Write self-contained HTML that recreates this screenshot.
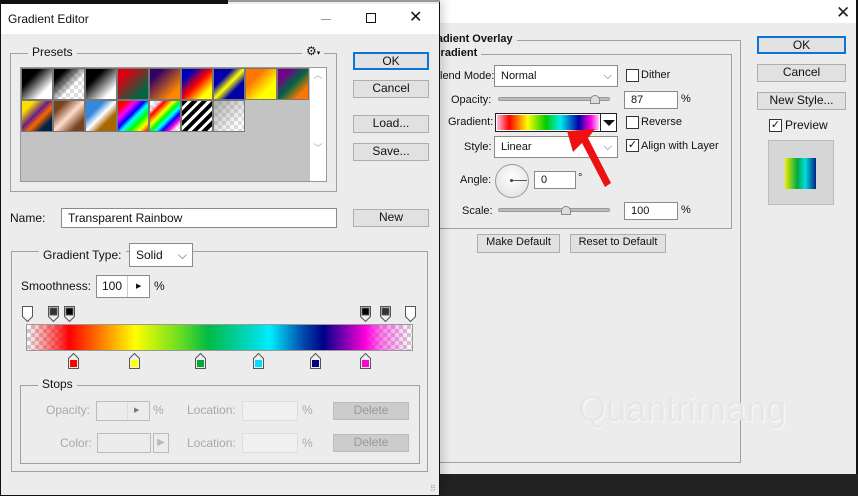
<!DOCTYPE html>
<html><head><meta charset="utf-8"><style>
*{box-sizing:border-box;margin:0;padding:0}
body{width:858px;height:496px;overflow:hidden;background:#ececec;position:relative;font-family:"Liberation Sans",sans-serif;font-size:11px;color:#111}
.a{position:absolute}
.btn{position:absolute;background:#e1e1e1;border:1px solid #adadad;text-align:center;font-size:12px;line-height:15px}
.inp{position:absolute;background:#fff;border:1px solid #8a8a8a;font-size:11px;padding-left:6px}
.box{position:absolute;border:1px solid #a0a0a0}
.lbl{position:absolute;background:#ececec;padding:0 4px;font-size:12px}
.cb{position:absolute;width:13px;height:13px;background:#fff;border:1px solid #333}
.dis{color:#a8a8a8}
.sw{position:absolute;width:32px;height:32px;border:1px solid #777}
.chk{background-color:#fff;background-image:linear-gradient(45deg,#ccc 25%,transparent 25%,transparent 75%,#ccc 75%),linear-gradient(45deg,#ccc 25%,transparent 25%,transparent 75%,#ccc 75%);background-size:8px 8px;background-position:0 0,4px 4px}
</style></head><body>
<!-- right dialog -->
<div class="a" style="left:0;top:0;width:858px;height:23px;background:#fff"></div>
<div class="a" style="left:856px;top:0;width:2px;height:496px;background:#111"></div>
<div class="a" style="left:836px;top:3px;font-size:17px;color:#222">✕</div>
<div class="a" style="left:440px;top:474px;width:418px;height:22px;background:#222"></div>
<div class="box" style="left:430px;top:40px;width:311px;height:423px"></div>
<div class="box" style="left:430px;top:54px;width:302px;height:175px"></div>
<div class="lbl" style="left:420px;top:33px;font-weight:bold;font-size:11px">Gradient Overlay</div>
<div class="lbl" style="left:428px;top:47px;font-weight:bold;font-size:11px">Gradient</div>
<div class="a" style="left:440px;top:70px">lend Mode:</div>
<div class="inp" style="left:494px;top:65px;width:124px;height:22px;line-height:20px">Normal<span style="position:absolute;right:5px;color:#555">⌵</span></div>
<div class="cb" style="left:626px;top:69px"></div><div class="a" style="left:641px;top:69px">Dither</div>
<div class="a" style="left:451px;top:94px">Opacity:</div>
<div class="a" style="left:498px;top:97px;width:112px;height:4px;background:#bbb;border-radius:2px;border:1px solid #999"></div>
<div class="a" style="left:590px;top:95px;width:10px;height:9px;background:#ddd;border:1px solid #888;border-radius:5px 5px 0 0"></div>
<div class="inp" style="left:624px;top:91px;width:54px;height:18px;line-height:16px">87</div><div class="a" style="left:681px;top:93px">%</div>
<div class="a" style="left:448px;top:116px">Gradient:</div>
<div class="a" style="left:495px;top:113px;width:122px;height:19px;border:1px solid #222;background:#fff"></div>
<div class="a" style="left:497px;top:115px;width:102px;height:15px;background:linear-gradient(90deg,#fbd 0%,#f00 12%,#ff0 30%,#0c0 48%,#0ee 62%,#00a 80%,#f0d 92%,#fcf 100%)"></div>
<div class="a" style="left:600px;top:114px;width:1px;height:17px;background:#222"></div>
<div class="a" style="left:603px;top:120px;width:0;height:0;border-left:6px solid transparent;border-right:6px solid transparent;border-top:6px solid #111"></div>
<div class="cb" style="left:626px;top:116px"></div><div class="a" style="left:641px;top:116px">Reverse</div>
<div class="a" style="left:464px;top:141px">Style:</div>
<div class="inp" style="left:494px;top:136px;width:124px;height:22px;line-height:20px">Linear<span style="position:absolute;right:5px;color:#555">⌵</span></div>
<div class="cb" style="left:626px;top:139px;font-size:11px;line-height:11px;text-align:center">✓</div><div class="a" style="left:641px;top:140px">Align with Layer</div>
<div class="a" style="left:460px;top:174px">Angle:</div>
<div class="a" style="left:495px;top:164px;width:34px;height:34px;border-radius:50%;border:1px solid #999;background:radial-gradient(circle at 50% 40%,#fff,#ddd)"></div>
<div class="a" style="left:511px;top:180px;width:16px;height:1px;background:#555"></div>
<div class="a" style="left:510px;top:179px;width:3px;height:3px;border-radius:50%;background:#444"></div>
<div class="inp" style="left:534px;top:171px;width:42px;height:18px;line-height:16px">0</div><div class="a" style="left:578px;top:172px">°</div>
<div class="a" style="left:462px;top:205px">Scale:</div>
<div class="a" style="left:498px;top:208px;width:112px;height:4px;background:#bbb;border-radius:2px;border:1px solid #999"></div>
<div class="a" style="left:561px;top:206px;width:10px;height:9px;background:#ddd;border:1px solid #888;border-radius:5px 5px 0 0"></div>
<div class="inp" style="left:624px;top:202px;width:54px;height:18px;line-height:16px">100</div><div class="a" style="left:681px;top:204px">%</div>
<div class="btn" style="left:477px;top:234px;width:83px;height:19px;font-size:11px">Make Default</div>
<div class="btn" style="left:570px;top:234px;width:96px;height:19px;font-size:11px">Reset to Default</div>
<div class="btn" style="left:757px;top:36px;width:89px;height:18px;border:2px solid #0a74d8">OK</div>
<div class="btn" style="left:757px;top:64px;width:89px;height:18px">Cancel</div>
<div class="btn" style="left:757px;top:92px;width:89px;height:18px">New Style...</div>
<div class="cb" style="left:769px;top:119px;font-size:11px;line-height:11px;text-align:center">✓</div><div class="a" style="left:785px;top:118px;font-size:12px">Preview</div>
<div class="a" style="left:768px;top:140px;width:66px;height:65px;background:#d6d6d6;border:1px solid #bbb"></div>
<div class="a" style="left:785px;top:158px;width:31px;height:31px;background:linear-gradient(90deg,#ee0,#0a4 40%,#0dd 65%,#028)"></div>
<div class="a" style="left:578px;top:388px;font-size:36px;color:#e6e6e6;text-shadow:1px 1px 1px #fafafa">Quantrimang</div>
<svg class="a" style="left:555px;top:125px" width="60" height="66"><polygon points="12,6 40,4 33,13 56,58 50,62 27,18 18,27" fill="#ee1111"/></svg>
<!-- left dialog -->
<div class="a" style="left:0;top:0;width:440px;height:496px;background:#ececec;border:1px solid #111;border-top:none;box-shadow:4px 0 8px rgba(0,0,0,.15)"></div>
<div class="a" style="left:0;top:0;width:228px;height:4px;background:#111"></div>
<div class="a" style="left:228px;top:0;width:212px;height:2px;background:#999"></div>
<div class="a" style="left:1px;top:4px;width:438px;height:30px;background:#fff"></div>
<div class="a" style="left:8px;top:12px;font-size:12px">Gradient Editor</div>
<div class="a" style="left:321px;top:19px;width:10px;height:1px;background:#999"></div>
<div class="a" style="left:366px;top:13px;width:10px;height:10px;border:1px solid #111"></div>
<div class="a" style="left:409px;top:7px;font-size:16px">✕</div>
<div class="box" style="left:10px;top:53px;width:327px;height:139px"></div>
<div class="lbl" style="left:28px;top:45px">Presets</div>
<div class="lbl" style="left:302px;top:44px;font-size:12px">⚙<span style="font-size:7px">▾</span></div>
<div class="a" style="left:20px;top:67px;width:307px;height:115px;background:#c3c3c3;border:1px solid #999"></div>
<div class="a" style="left:310px;top:68px;width:16px;height:113px;background:#fff;color:#aaa;font-size:9px;text-align:center">︿<br><br><br><br><br><br><br>﹀</div>
<div class="sw" style="left:21px;top:68px;background:linear-gradient(135deg,#000 30%,#fff 75%)"></div>
<div class="sw chk" style="left:53px;top:68px;background-image:linear-gradient(135deg,#000 20%,transparent 60%),linear-gradient(45deg,#ddd 25%,transparent 25%,transparent 75%,#ddd 75%),linear-gradient(45deg,#ddd 25%,transparent 25%,transparent 75%,#ddd 75%);background-size:auto,8px 8px,8px 8px;background-position:0 0,0 0,4px 4px"></div>
<div class="sw" style="left:85px;top:68px;background:linear-gradient(135deg,#000 30%,#fff 80%)"></div>
<div class="sw" style="left:117px;top:68px;background:linear-gradient(135deg,#d01 20%,#064 80%)"></div>
<div class="sw" style="left:149px;top:68px;background:linear-gradient(135deg,#306 20%,#f80 80%)"></div>
<div class="sw" style="left:181px;top:68px;background:linear-gradient(135deg,#00b 20%,#f00 50%,#ff0 80%)"></div>
<div class="sw" style="left:213px;top:68px;background:linear-gradient(135deg,#00a 30%,#ff0 50%,#00a 70%)"></div>
<div class="sw" style="left:245px;top:68px;background:linear-gradient(135deg,#f70 30%,#ff0 70%)"></div>
<div class="sw" style="left:277px;top:68px;background:linear-gradient(135deg,#708 20%,#064 50%,#f70 80%)"></div>
<div class="sw" style="left:21px;top:100px;background:linear-gradient(135deg,#fd0 20%,#628 45%,#f60 60%,#024 80%)"></div>
<div class="sw" style="left:53px;top:100px;background:linear-gradient(135deg,#742 20%,#fdc 50%,#742 80%)"></div>
<div class="sw" style="left:85px;top:100px;background:linear-gradient(135deg,#38d 30%,#fff 50%,#a60 70%)"></div>
<div class="sw" style="left:117px;top:100px;background:linear-gradient(135deg,#f00 15%,#f0f 30%,#00f 45%,#0ff 55%,#0f0 70%,#ff0 85%,#f00)"></div>
<div class="sw" style="left:149px;top:100px;background-color:#fff;background-image:linear-gradient(135deg,transparent 15%,#f00 25%,#ff0 40%,#0f0 50%,#0ff 60%,#00f 70%,#f0d 80%,transparent 90%),linear-gradient(45deg,#ddd 25%,transparent 25%,transparent 75%,#ddd 75%),linear-gradient(45deg,#ddd 25%,transparent 25%,transparent 75%,#ddd 75%);background-size:auto,8px 8px,8px 8px;background-position:0 0,0 0,4px 4px"></div>
<div class="sw" style="left:181px;top:100px;background:repeating-linear-gradient(135deg,#000 0 4px,#fff 4px 7px)"></div>
<div class="sw" style="left:213px;top:100px;background-color:#fff;background-image:linear-gradient(135deg,rgba(120,120,120,.6),transparent 80%),linear-gradient(45deg,#ddd 25%,transparent 25%,transparent 75%,#ddd 75%),linear-gradient(45deg,#ddd 25%,transparent 25%,transparent 75%,#ddd 75%);background-size:auto,8px 8px,8px 8px;background-position:0 0,0 0,4px 4px"></div>
<div class="btn" style="left:353px;top:52px;width:76px;height:18px;border:2px solid #0a74d8">OK</div>
<div class="btn" style="left:353px;top:80px;width:76px;height:18px">Cancel</div>
<div class="btn" style="left:353px;top:115px;width:76px;height:18px">Load...</div>
<div class="btn" style="left:353px;top:143px;width:76px;height:18px">Save...</div>
<div class="a" style="left:10px;top:211px;font-size:12px">Name:</div>
<div class="inp" style="left:61px;top:208px;width:276px;height:20px;line-height:18px;font-size:12px">Transparent Rainbow</div>
<div class="btn" style="left:353px;top:209px;width:76px;height:18px">New</div>
<div class="box" style="left:11px;top:251px;width:417px;height:221px"></div>
<div class="lbl" style="left:39px;top:248px">Gradient Type:</div>
<div class="inp" style="left:129px;top:243px;width:64px;height:24px;line-height:22px;font-size:12px">Solid<span style="position:absolute;right:5px;color:#555">⌵</span></div>
<div class="a" style="left:21px;top:279px;font-size:12px">Smoothness:</div>
<div class="inp" style="left:96px;top:275px;width:54px;height:23px;line-height:21px;font-size:12px;padding-left:5px">100<span style="position:absolute;left:30px;top:0;width:1px;height:21px;background:#ccc"></span><span style="position:absolute;left:39px;font-size:7px">▶</span></div>
<div class="a" style="left:154px;top:279px;font-size:12px">%</div>
<div class="a chk" style="left:26px;top:324px;width:387px;height:27px;border:1px solid #999"></div>
<div class="a" style="left:27px;top:325px;width:385px;height:25px;background:linear-gradient(90deg,rgba(255,0,0,0) 0%,rgba(255,0,0,.7) 8%,#f00 11%,#f80 20%,#ff0 28%,#6d2 40%,#0b4 47%,#0dd 60%,#0ef 63%,#04a 72%,#008 77%,#f0d 88%,rgba(255,0,220,.5) 92%,rgba(255,0,220,0) 100%)"></div>
<svg class="a" style="left:0;top:304px" width="440" height="72">
<g stroke="#555" stroke-width="1">
<path d="M22.5,2.5h10v10l-5,5l-5,-5z" fill="#fff"/>
<path d="M48.5,2.5h10v10l-5,5l-5,-5z" fill="#eee"/><rect x="50" y="4" width="7" height="7" fill="#333"/>
<path d="M64.5,2.5h10v10l-5,5l-5,-5z" fill="#eee"/><rect x="66" y="4" width="7" height="7" fill="#000"/>
<path d="M360.5,2.5h10v10l-5,5l-5,-5z" fill="#eee"/><rect x="362" y="4" width="7" height="7" fill="#000"/>
<path d="M380.5,2.5h10v10l-5,5l-5,-5z" fill="#eee"/><rect x="382" y="4" width="7" height="7" fill="#333"/>
<path d="M405.5,2.5h10v10l-5,5l-5,-5z" fill="#fff"/>
</g>
<g stroke="#555" stroke-width="1" fill="#eee">
<path d="M68.5,64.5v-10l5,-5l5,5v10z"/><path d="M129.5,64.5v-10l5,-5l5,5v10z"/><path d="M195.5,64.5v-10l5,-5l5,5v10z"/>
<path d="M253.5,64.5v-10l5,-5l5,5v10z"/><path d="M310.5,64.5v-10l5,-5l5,5v10z"/><path d="M360.5,64.5v-10l5,-5l5,5v10z"/>
</g>
<rect x="70" y="56" width="7" height="7" fill="#f00"/><rect x="131" y="56" width="7" height="7" fill="#ff0"/><rect x="197" y="56" width="7" height="7" fill="#0a3"/>
<rect x="255" y="56" width="7" height="7" fill="#0df"/><rect x="312" y="56" width="7" height="7" fill="#008"/><rect x="362" y="56" width="7" height="7" fill="#f0c"/>
</svg>
<div class="box" style="left:20px;top:385px;width:400px;height:79px"></div>
<div class="lbl" style="left:38px;top:377px">Stops</div>
<div class="a dis" style="left:46px;top:403px;font-size:12px">Opacity:</div>
<div class="a" style="left:96px;top:401px;width:54px;height:20px;border:1px solid #bbb;background:#ececec"><span style="position:absolute;left:30px;top:0;width:1px;height:18px;background:#ddd"></span><span style="position:absolute;left:37px;top:4px;font-size:7px;color:#777">▶</span></div>
<div class="a dis" style="left:153px;top:403px;font-size:12px">%</div>
<div class="a dis" style="left:187px;top:403px;font-size:12px">Location:</div>
<div class="a" style="left:242px;top:401px;width:56px;height:20px;border:1px solid #ddd;background:#f0f0f0"></div>
<div class="a dis" style="left:302px;top:403px;font-size:12px">%</div>
<div class="btn" style="left:333px;top:402px;width:76px;height:18px;background:#ccc;border-color:#bbb;color:#999">Delete</div>
<div class="a dis" style="left:60px;top:436px;font-size:12px">Color:</div>
<div class="a" style="left:97px;top:433px;width:54px;height:20px;border:1px solid #bbb"></div>
<div class="a" style="left:153px;top:433px;width:16px;height:20px;border:1px solid #bbb;color:#bbb;font-size:10px;text-align:center;line-height:18px">▶</div>
<div class="a dis" style="left:187px;top:436px;font-size:12px">Location:</div>
<div class="a" style="left:242px;top:433px;width:56px;height:20px;border:1px solid #ddd;background:#f0f0f0"></div>
<div class="a dis" style="left:302px;top:436px;font-size:12px">%</div>
<div class="btn" style="left:333px;top:434px;width:76px;height:18px;background:#ccc;border-color:#bbb;color:#999">Delete</div>
<div class="a" style="left:430px;top:484px;font-size:8px;color:#999">⠿</div>
</body></html>
